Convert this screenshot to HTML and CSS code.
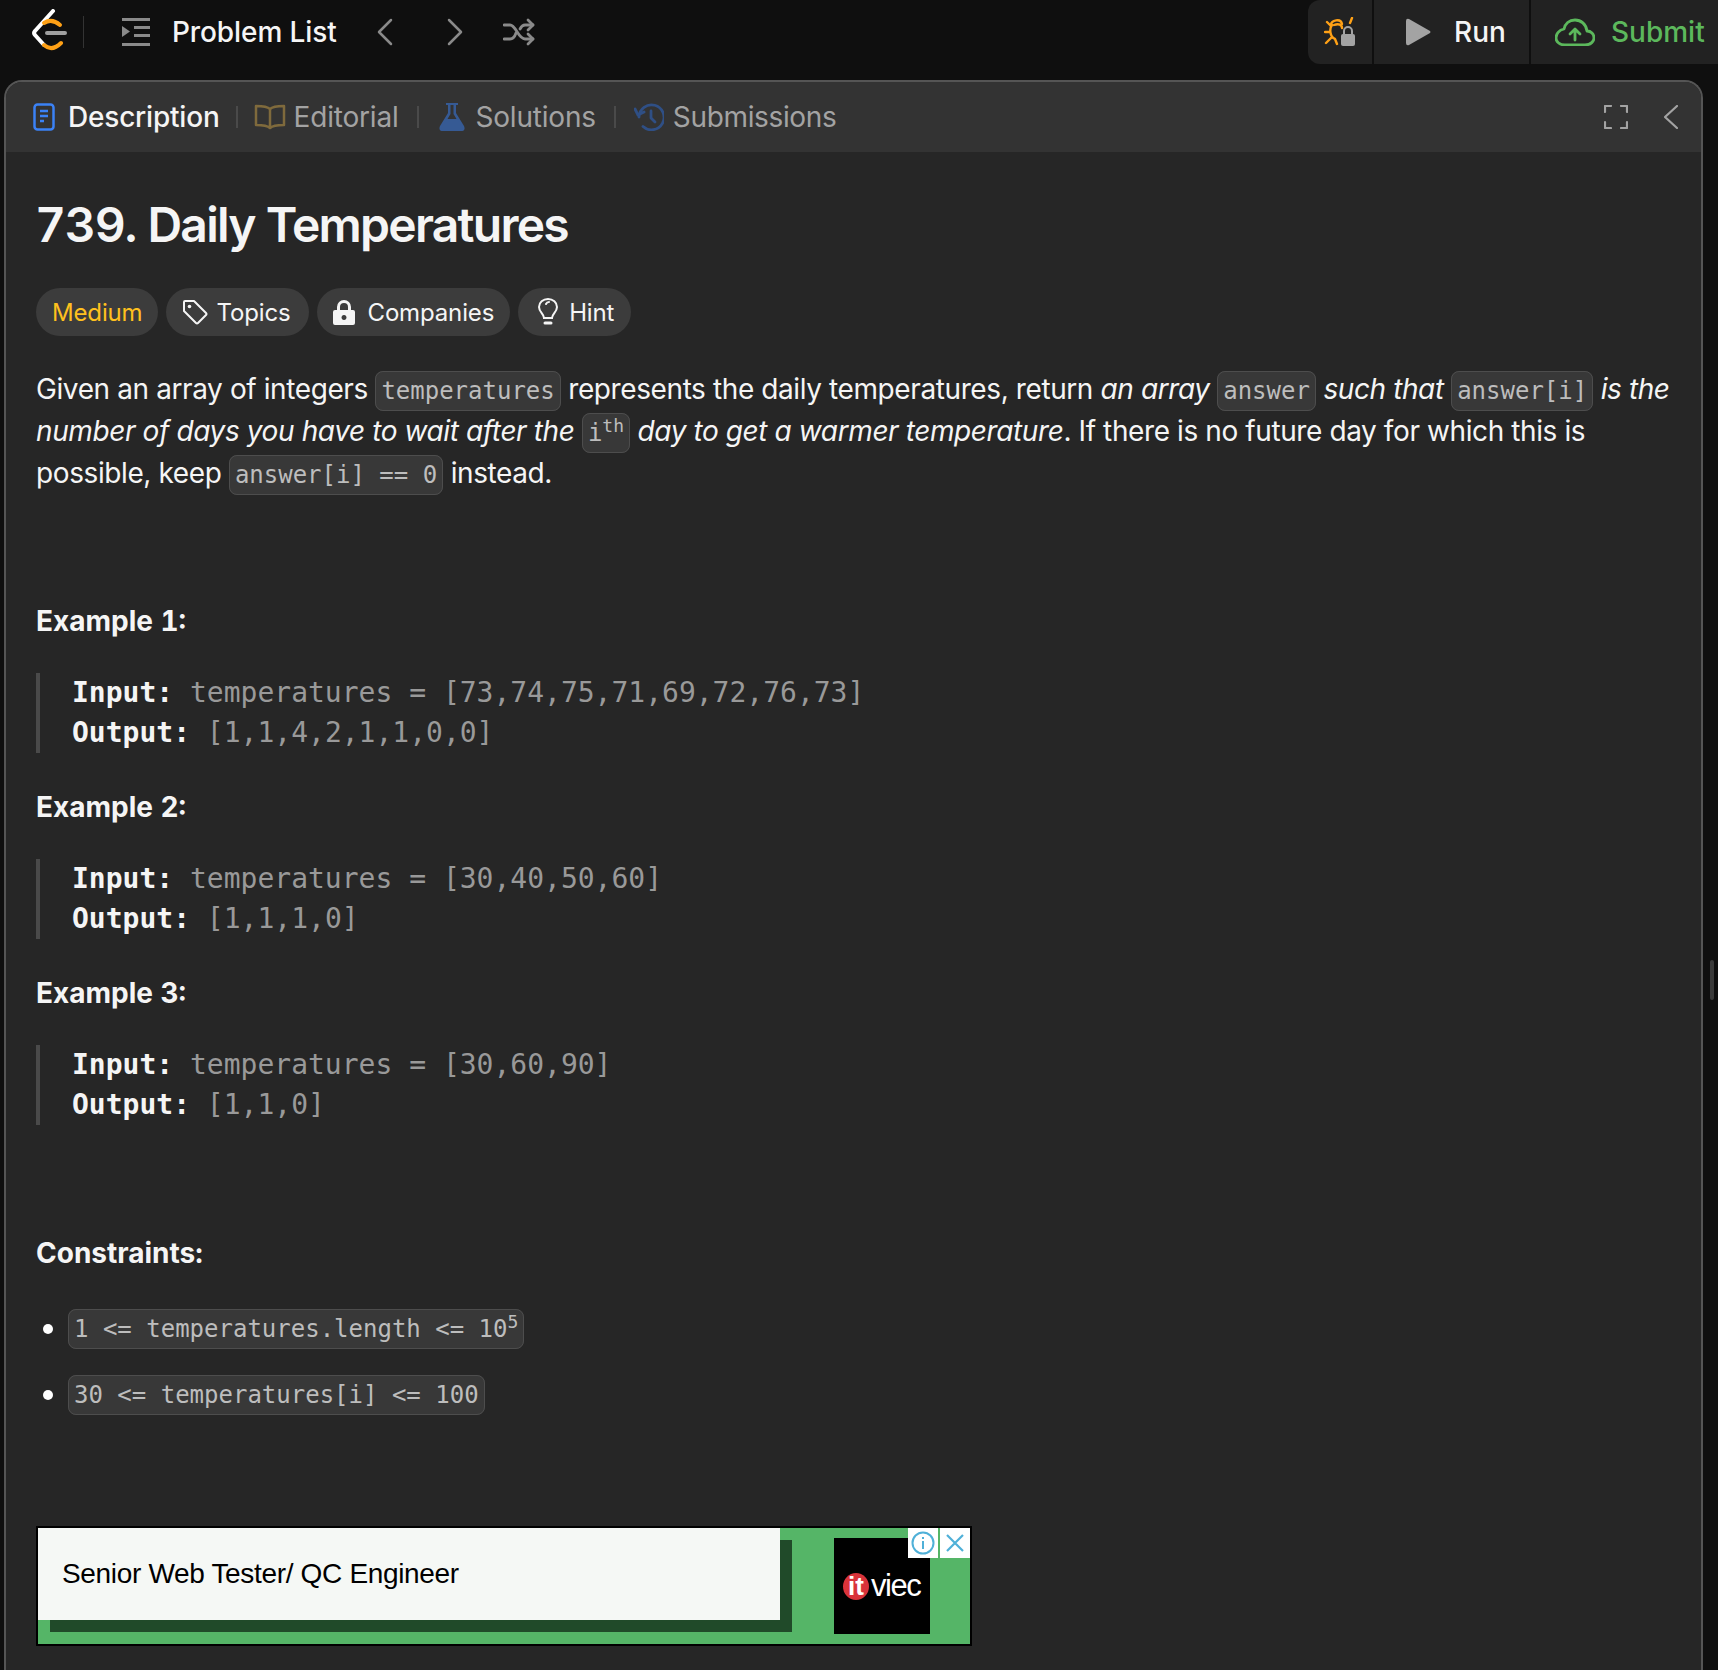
FILE: index.html
```html
<!DOCTYPE html>
<html lang="en">
<head>
<meta charset="UTF-8" />
<title>Daily Temperatures</title>
<link rel="stylesheet" href="styles.css">
</head>
<body>

<header class="topbar">
  <div class="nav-left">
    <svg class="logo" width="36" height="42" viewBox="0 0 36 42" fill="none" stroke-linecap="round" stroke-linejoin="round">
      <path d="M21 2 L3 22 Q1 24 3 26 L12 36" stroke="#fff" stroke-width="4"/>
      <path d="M12 14 Q20 9 28 16" stroke="#ffa116" stroke-width="4"/>
      <path d="M12 36 Q20 43 29 34" stroke="#ffa116" stroke-width="4"/>
      <path d="M15 24 H33" stroke="#a0a0a0" stroke-width="4"/>
    </svg>
    <span class="nav-divider"></span>
    <svg class="list-icon" width="28" height="28" viewBox="0 0 28 28" fill="#8a8a8a">
      <rect x="0" y="0" width="28" height="3"/>
      <rect x="12" y="8" width="16" height="3"/>
      <rect x="12" y="16" width="16" height="3"/>
      <rect x="0" y="25" width="28" height="3"/>
      <path d="M0 8 L8 13.500 L0 19 Z"/>
    </svg>
    <span class="nav-title">Problem List</span>
    <svg class="nav-prev" width="18" height="28" viewBox="0 0 18 28" fill="none" stroke="#8a8a8a" stroke-width="2.500" stroke-linecap="round" stroke-linejoin="round"><path d="M15 2 L3 14 L15 26"/></svg>
    <svg class="nav-next" width="18" height="28" viewBox="0 0 18 28" fill="none" stroke="#8a8a8a" stroke-width="2.500" stroke-linecap="round" stroke-linejoin="round"><path d="M3 2 L15 14 L3 26"/></svg>
    <svg class="nav-shuffle" width="32" height="28" viewBox="0 0 32 28" fill="none" stroke="#8a8a8a" stroke-width="2.800" stroke-linecap="round" stroke-linejoin="round">
      <path d="M1 7 H7 C13 7 15 21 22 21 H30"/>
      <path d="M1 21 H7 C10 21 12 18 13 15"/>
      <path d="M17 11 C18 9 20 7 22 7 H30"/>
      <path d="M25 2 L30 7 L25 12"/>
      <path d="M25 16 L30 21 L25 26"/>
    </svg>
  </div>
  <div class="actions">
    <div class="action action-debug">
      <svg width="32" height="30" viewBox="0 0 32 30" fill="none" stroke="#ffa116" stroke-width="2.400" stroke-linecap="round" stroke-linejoin="round">
        <path d="M7 8 C7 3 17 1 18 7 M10 8 C15 6 18 8 18 11"/>
        <path d="M8 8 C5 12 6 20 11 22 M3 5 L7 9 M1 15 H6 M2 26 L8 20 M11 22 L13 27 M28 1 L26 6"/>
        <rect x="17" y="17" width="14" height="12" rx="2" fill="#a3a3a3" stroke="none"/>
        <path d="M20 17 V14 a4 4 0 0 1 8 0 V17" stroke="#a3a3a3" stroke-width="2"/>
      </svg>
    </div>
    <div class="action action-run">
      <svg width="26" height="28" viewBox="0 0 26 28"><path d="M1 3 Q1 0 4 1 L25 13 Q26 14 25 15 L4 27 Q1 28 1 25 Z" fill="#a3a3a3"/></svg>
      <span>Run</span>
    </div>
    <div class="action action-submit">
      <svg width="40" height="28" viewBox="0 0 40 28" fill="none" stroke="#5cb85c" stroke-width="2.800" stroke-linecap="round" stroke-linejoin="round">
        <path d="M10 27 H30 C36 27 39 23 39 20 C39 16 36 13 32 13 C31 6 26 2 20 2 C14 2 10 6 9 11 C4 12 1 16 1 20 C1 24 5 27 10 27 Z"/>
        <path d="M20 22 V12 M15 16 L20 11 L25 16"/>
      </svg>
      <span>Submit</span>
    </div>
  </div>
</header>

<main class="panel">
  <div class="tabs">
    <div class="tab tab-active">
      <svg width="22" height="28" viewBox="0 0 22 28" fill="none" stroke="#3b82f6" stroke-width="2.500"><rect x="1.500" y="1.500" width="19" height="25" rx="3"/><path d="M7 8 H15 M7 13 H15 M7 18 H11"/></svg>
      <span>Description</span>
    </div>
    <span class="tab-sep tab-sep-first"></span>
    <div class="tab tab-editorial">
      <svg width="32" height="26" viewBox="0 0 32 26" fill="none" stroke="#7f6a3c" stroke-width="2.500" stroke-linejoin="round"><path d="M16 5 C13 2 7 2 2 2 V21 C7 21 13 21 16 24 C19 21 25 21 30 21 V2 C25 2 19 2 16 5 Z M16 5 V24"/></svg>
      <span>Editorial</span>
    </div>
    <span class="tab-sep"></span>
    <div class="tab tab-solutions">
      <svg width="26" height="28" viewBox="0 0 26 28"><path d="M7 0 H19 V2 H17 V10 L25 23 Q27 28 22 28 H4 Q-1 28 1 23 L9 10 V2 H7 Z M11.500 2 V11 L8.500 16 H17.500 L14.500 11 V2 Z" fill="#365a94" fill-rule="evenodd"/></svg>
      <span>Solutions</span>
    </div>
    <span class="tab-sep"></span>
    <div class="tab tab-submissions">
      <svg width="30" height="28" viewBox="0 0 30 28" fill="none" stroke="#2f4f85" stroke-width="2.800" stroke-linecap="round" stroke-linejoin="round"><path d="M5 14 A 12.500 12.500 0 1 1 9 23.500"/><path d="M1 6 L4 12 L10 9"/><path d="M17 8 V15 L21 19"/></svg>
      <span>Submissions</span>
    </div>
    <div class="tab-tools">
      <svg width="24" height="24" viewBox="0 0 24 24" fill="none" stroke="#a3a3a3" stroke-width="2.200" stroke-linecap="round" stroke-linejoin="round"><path d="M1 7 V1 H7 M17 1 H23 V7 M1 17 V23 H7 M17 23 H23 V17"/></svg>
      <svg width="14" height="24" viewBox="0 0 14 24" fill="none" stroke="#a3a3a3" stroke-width="2.200" stroke-linecap="round" stroke-linejoin="round"><path d="M13 1 L1 12 L13 23"/></svg>
    </div>
  </div>

  <div class="content">
    <h1 class="title"><span class="title-num">739.</span> Daily Temperatures</h1>

    <div class="chips">
      <span class="chip chip-medium">Medium</span>
      <span class="chip chip-topics">
        <svg width="26" height="26" viewBox="0 0 26 26" fill="none" stroke="#f5f5f5" stroke-width="2" stroke-linejoin="round"><path d="M2 3 Q2 2 3 2 H12 L24 14 Q25 15 24 16 L16 24 Q15 25 14 24 L2 12 Z"/><circle cx="7.500" cy="7.500" r="1.800" fill="#f5f5f5" stroke="none"/></svg>
        Topics
      </span>
      <span class="chip chip-companies">
        <svg width="22" height="26" viewBox="0 0 22 26"><path d="M2 11 H4 V8 a7 7 0 0 1 14 0 V11 H20 Q22 11 22 13 V24 Q22 26 20 26 H2 Q0 26 0 24 V13 Q0 11 2 11 Z M7 11 H15 V8 a4 4 0 0 0 -8 0 Z M11 16 a2.500 2.500 0 1 0 .01 0 Z" fill="#f5f5f5" fill-rule="evenodd"/></svg>
        Companies
      </span>
      <span class="chip chip-hint">
        <svg width="20" height="28" viewBox="0 0 20 28" fill="none" stroke="#f5f5f5" stroke-width="2" stroke-linecap="round"><path d="M6 20 C6 16 1 14 1 9 a9 8 0 0 1 18 0 C19 14 14 16 14 20 Z"/><path d="M7 25 H13" stroke-width="3"/><path d="M8 6 Q9 4 11 4"/></svg>
        Hint
      </span>
    </div>

    <p class="desc">Given an array of integers <code>temperatures</code> represents the daily temperatures, return <em>an array</em> <code>answer</code> <em>such that</em> <code>answer[i]</code> <em>is the number of days you have to wait after the</em> <code>i<sup>th</sup></code> <em>day to get a warmer temperature</em>. If there is no future day for which this is possible, keep <code>answer[i] == 0</code> instead.</p>

    <h2 class="heading heading-first">Example 1:</h2>
    <pre class="example"><b>Input:</b> temperatures = [73,74,75,71,69,72,76,73]
<b>Output:</b> [1,1,4,2,1,1,0,0]</pre>

    <h2 class="heading">Example 2:</h2>
    <pre class="example"><b>Input:</b> temperatures = [30,40,50,60]
<b>Output:</b> [1,1,1,0]</pre>

    <h2 class="heading">Example 3:</h2>
    <pre class="example"><b>Input:</b> temperatures = [30,60,90]
<b>Output:</b> [1,1,0]</pre>

    <h2 class="heading heading-constraints">Constraints:</h2>
    <ul class="constraints">
      <li><code>1 &lt;= temperatures.length &lt;= 10<sup>5</sup></code></li>
      <li><code>30 &lt;= temperatures[i] &lt;= 100</code></li>
    </ul>

    <div class="ad">
      <div class="ad-copy">Senior Web Tester/ QC Engineer</div>
      <div class="ad-logo"><span class="ad-it">it</span><span class="ad-viec">viec</span></div>
      <div class="ad-choices">
        <span class="ad-btn">
          <svg width="24" height="24" viewBox="0 0 24 24" fill="none" stroke="#4fb0d8" stroke-width="2"><circle cx="12" cy="12" r="10.500"/><path d="M12 10 V18 M12 6 V8"/></svg>
        </span>
        <span class="ad-btn">
          <svg width="22" height="22" viewBox="0 0 22 22" fill="none" stroke="#4fb0d8" stroke-width="2.200"><path d="M3 3 L19 19 M19 3 L3 19"/></svg>
        </span>
      </div>
    </div>
  </div>
</main>

<span class="drag-handle"></span>

</body>
</html>
```

FILE: styles.css
```css
html, body {
  margin: 0;
  height: 100%;
  overflow: hidden;
  background: #0f0f0f;
  color: #f5f5f5;
  font-family: Inter, "Liberation Sans", sans-serif;
}

/* barra superior */
.topbar {
  height: 80px;
  display: flex;
  justify-content: space-between;
  align-items: flex-start;
}

.nav-left {
  display: flex;
  align-items: center;
  height: 64px;
  padding-left: 32px;
}

.logo { margin-top: -4px; }

.nav-divider {
  width: 1px;
  height: 32px;
  background: #333;
  margin-left: 15px;
}

.list-icon { margin-left: 38px; }

.nav-title {
  margin-left: 22px;
  font-size: 28px;
  font-weight: 500;
  color: #f5f5f5;
  letter-spacing: -0.1px;
}

.nav-prev { margin-left: 39px; }
.nav-next { margin-left: 52px; }
.nav-shuffle { margin-left: 39px; }

.actions {
  display: flex;
  height: 64px;
  gap: 2px;
}

.action {
  display: flex;
  align-items: center;
  background: #222;
  font-size: 28px;
  font-weight: 500;
}

.action-debug {
  width: 64px;
  justify-content: center;
  border-bottom-left-radius: 12px;
  border-top-left-radius: 12px;
}

.action-run {
  width: 155px;
  padding-left: 31px;
  gap: 23px;
  box-sizing: border-box;
}

.action-submit {
  flex: 1;
  width: 187px;
  padding-left: 24px;
  gap: 16px;
  box-sizing: border-box;
  color: #5cb85c;
}

/* panel principal */
.panel {
  margin-left: 4px;
  width: 1699px;
  height: 1590px;
  box-sizing: border-box;
  border: 2px solid #555;
  border-bottom: 0;
  border-radius: 18px 18px 0 0;
  background: #262626;
  overflow: hidden;
}

.tabs {
  height: 70px;
  background: #333;
  display: flex;
  align-items: center;
  padding: 0 23px 0 27px;
}

.tab {
  display: flex;
  align-items: center;
  gap: 9px;
  font-size: 28px;
  letter-spacing: -0.2px;
  color: #a3a3a3;
}

.tab-active {
  color: #f5f5f5;
  font-weight: 500;
  gap: 13px;
  margin-right: -2px;
}

.tab-editorial { gap: 8px; }

.tab-solutions {
  gap: 11px;
  margin-left: 2px;
}

.tab-submissions { letter-spacing: -0.35px; }

.tab-sep {
  width: 2px;
  height: 22px;
  background: #4a4a4a;
  margin: 0 18px;
}

.tab-sep-first { margin-right: 16px; }

.tab-tools {
  margin-left: auto;
  display: flex;
  align-items: center;
  gap: 36px;
}

.content {
  padding: 0 26px 0 30px;
}

.title {
  margin: 43px 0 0 -1px;
  font-size: 48px;
  line-height: 60px;
  font-weight: 600;
  letter-spacing: -1.75px;
  font-feature-settings: "tnum";
}

.title-num { letter-spacing: -1.2px; }

.chips {
  display: flex;
  gap: 8px;
  margin-top: 33px;
}

.chip {
  height: 48px;
  display: flex;
  align-items: center;
  gap: 9px;
  padding: 0 16px;
  border-radius: 24px;
  background: #3c3c3c;
  font-size: 24px;
  letter-spacing: -0.15px;
}

.chip-medium {
  color: #ffc01e;
  padding-right: 15px;
}

.chip-topics { padding-right: 18px; }
.chip-companies { gap: 13px; }

.chip-hint {
  padding: 0 17px 0 20px;
  gap: 11px;
}

.desc {
  margin: 32px 0 0;
  font-size: 28px;
  line-height: 42px;
  letter-spacing: -0.4px;
  color: #f5f5f5;
}

code {
  font-family: "DejaVu Sans Mono", monospace;
  font-size: 24px;
  line-height: 1;
  letter-spacing: 0;
  color: #bdbdbd;
  background: #383838;
  border: 1px solid #4d4d4d;
  border-radius: 8px;
  padding: 5px;
}

sup { font-size: 18px; line-height: 0; }

.heading {
  margin: 0;
  font-size: 28px;
  line-height: 42px;
  font-weight: 700;
  font-feature-settings: "tnum";
}

.heading-first { margin-top: 106px; }
.heading-constraints { margin-top: 107px; }

.example {
  margin: 31px 0 33px;
  padding-left: 32px;
  border-left: 4px solid #4a4a4a;
  font-family: "DejaVu Sans Mono", monospace;
  font-size: 28px;
  line-height: 40px;
  color: #999;
}

.example b { color: #f5f5f5; }

.constraints {
  margin: 35px 0 0;
  padding-left: 32px;
  list-style: none;
}

.constraints li {
  position: relative;
  height: 66px;
  line-height: 44px;
}

.constraints li::before {
  content: "";
  position: absolute;
  left: -25px;
  top: 15px;
  width: 10px;
  height: 10px;
  border-radius: 50%;
  background: #fff;
}

/* anuncio */
.ad {
  position: relative;
  width: 936px;
  height: 120px;
  margin-top: 85px;
  box-sizing: border-box;
  border: 2px solid #000;
  background: #55b567;
}

.ad-copy {
  width: 742px;
  height: 92px;
  box-sizing: border-box;
  padding-left: 24px;
  background: #f5f8f5;
  box-shadow: 12px 12px 0 #204a29;
  color: #000;
  font-family: "Liberation Sans", sans-serif;
  font-size: 28px;
  letter-spacing: -0.33px;
  line-height: 92px;
}

.ad-logo {
  position: absolute;
  left: 796px;
  top: 10px;
  width: 96px;
  height: 96px;
  background: #000;
  display: flex;
  align-items: center;
  color: #fff;
}

.ad-it {
  margin-left: 9px;
  width: 26px;
  height: 27px;
  border-radius: 50%;
  background: #d9333a;
  font: 700 26px/26px "Liberation Sans", sans-serif;
  text-align: center;
}

.ad-viec {
  font: 400 31px/30px "Liberation Sans", sans-serif;
  letter-spacing: -1.5px;
  margin-left: 2px;
}

.ad-choices {
  position: absolute;
  right: 0;
  top: 0;
  display: flex;
  gap: 2px;
}

.ad-btn {
  width: 30px;
  height: 30px;
  background: #fff;
  display: flex;
  align-items: center;
  justify-content: center;
}

.drag-handle {
  position: absolute;
  left: 1710px;
  top: 960px;
  width: 4px;
  height: 40px;
  border-radius: 2px;
  background: #3a3a3a;
}
```
